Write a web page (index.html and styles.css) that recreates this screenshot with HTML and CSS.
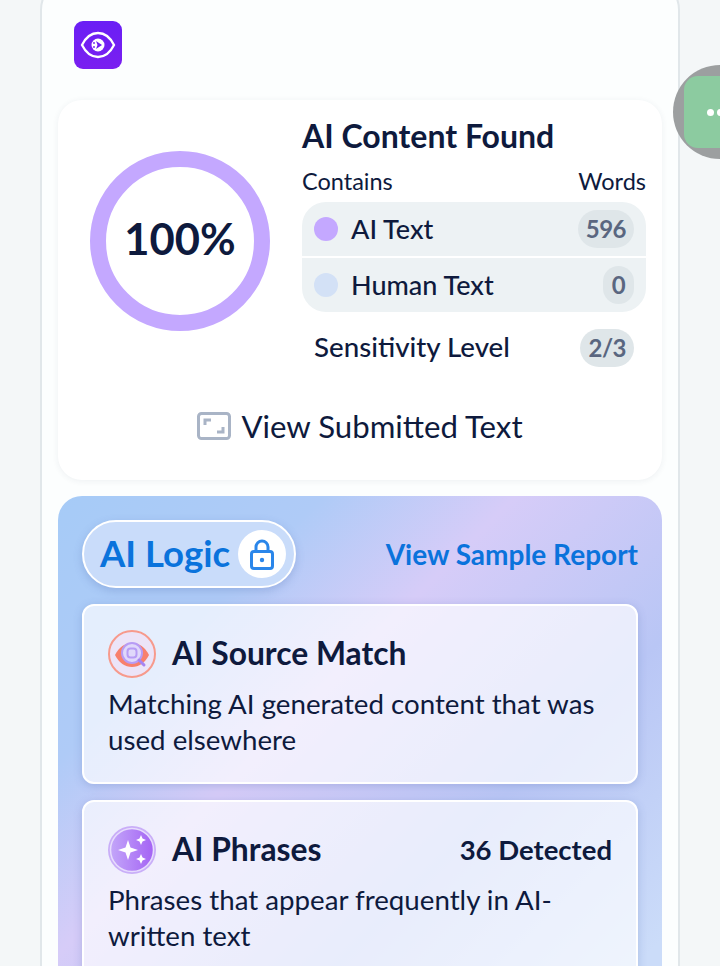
FILE: index.html
```html
<!DOCTYPE html>
<html lang="en">
<head>
    <meta charset="UTF-8">
    <meta name="viewport" content="width=device-width, initial-scale=1.0">
    <title>AI Content Found</title>
    <link rel="stylesheet" href="styles.css">
</head>
<body>
    <div class="card">

        <div class="brand">
            <svg viewBox="0 0 48 48" width="48" height="48" fill="none">
                <path d="M8 24c4-8 10-12 16-12s12 4 16 12c-4 8-10 12-16 12S12 32 8 24z" stroke="#fff" stroke-width="2.300"/>
                <circle cx="24" cy="24" r="6.500" fill="#fff"/>
                <path d="M22 20l6 4-6 4 1.500-4z" fill="#6d1ff2"/>
                <circle cx="20" cy="22" r="0.900" fill="#6d1ff2"/>
                <circle cx="20" cy="26" r="0.900" fill="#6d1ff2"/>
            </svg>
        </div>

        <div class="summary">
            <div class="summary-top">
                <div class="ring"><span class="ring-value">100%</span></div>
                <div class="stats">
                    <div class="stats-title">AI Content Found</div>
                    <div class="stats-head">
                        <span>Contains</span>
                        <span>Words</span>
                    </div>
                    <div class="stats-table">
                        <div class="stats-row">
                            <span class="dot dot-ai"></span>
                            <span class="stats-label">AI Text</span>
                            <span class="count">596</span>
                        </div>
                        <div class="stats-row">
                            <span class="dot dot-human"></span>
                            <span class="stats-label">Human Text</span>
                            <span class="count">0</span>
                        </div>
                    </div>
                    <div class="sensitivity">
                        <span class="stats-label sensitivity-label">Sensitivity Level</span>
                        <span class="count">2/3</span>
                    </div>
                </div>
            </div>
            <div class="view-text">
                <svg viewBox="0 0 34 28" width="34" height="28" fill="none" stroke="#a9b4c6" stroke-width="3">
                    <rect x="1.500" y="1.500" width="31" height="25" rx="3"/>
                    <path d="M8 13V8h6M26 15v5h-6"/>
                </svg>
                <span>View Submitted Text</span>
            </div>
        </div>

        <div class="logic">
            <div class="logic-head">
                <div class="logic-pill">
                    <span class="logic-pill-text">AI Logic</span>
                    <span class="lock">
                        <svg viewBox="0 0 24 31" width="24" height="31" fill="none" stroke="#2a86ea" stroke-width="3">
                            <rect x="1.500" y="12.500" width="21" height="17" rx="2.500"/>
                            <path d="M6 12V8a6 6 0 0 1 12 0v4"/>
                            <circle cx="12" cy="21" r="2.200" fill="#2a86ea" stroke="none"/>
                        </svg>
                    </span>
                </div>
                <span class="sample-link">View Sample Report</span>
            </div>

            <div class="logic-card">
                <div class="logic-card-head">
                    <svg class="logic-icon" viewBox="0 0 48 48" width="48" height="48" fill="none">
                        <circle cx="24" cy="24" r="23" fill="#ece4f8" stroke="#f79a8c" stroke-width="2"/>
                        <path d="M7 25c4-8 10-12 17-12s13 4 17 12c-4 8-10 12-17 12S11 33 7 25z" fill="#f8806c"/>
                        <circle cx="24" cy="23" r="10" fill="#e0d8fb" stroke="#b79cf5" stroke-width="2"/>
                        <rect x="19.500" y="18.500" width="9" height="9" rx="3" stroke="#b79cf5" stroke-width="2"/>
                        <path d="M31 30l5 5" stroke="#a583f2" stroke-width="3" stroke-linecap="round"/>
                    </svg>
                    <span class="logic-title">AI Source Match</span>
                </div>
                <p class="logic-desc">Matching AI generated content that was used elsewhere</p>
            </div>

            <div class="logic-card">
                <div class="logic-card-head">
                    <svg class="logic-icon" viewBox="0 0 48 48" width="48" height="48" fill="none">
                        <defs>
                            <linearGradient id="sparkle-bg" x1="0" y1="0" x2="1" y2="0">
                                <stop offset="0" stop-color="#c3a6f9"/>
                                <stop offset="1" stop-color="#a463f4"/>
                            </linearGradient>
                        </defs>
                        <circle cx="24" cy="24" r="24" fill="#c9aef8"/>
                        <circle cx="24" cy="24" r="21.500" fill="url(#sparkle-bg)" stroke="#e7dcfd" stroke-width="1.500"/>
                        <path d="M20 14l2.500 7.500L30 24l-7.500 2.500L20 34l-2.500-7.500L10 24l7.500-2.500z" fill="#fff"/>
                        <path d="M33 9l1.500 3.500L38 14l-3.500 1.500L33 19l-1.500-3.500L28 14l3.500-1.500z" fill="#fff"/>
                        <path d="M33 28l1.500 3.500L38 33l-3.500 1.500L33 38l-1.500-3.500L28 33l3.500-1.500z" fill="#fff"/>
                    </svg>
                    <span class="logic-title">AI Phrases</span>
                    <span class="detected">36 Detected</span>
                </div>
                <p class="logic-desc">Phrases that appear frequently in AI-written text</p>
            </div>
        </div>
    </div>

    <div class="chat-bubble">
        <div class="chat-inner"><span></span><span></span><span></span></div>
    </div>
</body>
</html>
```

FILE: styles.css
```css
html, body {
    height: 966px;
    overflow: hidden;
}
body {
    margin: 0;
    padding: 0 40px;
    background-color: #f4f7f8;
    font-family: "Lato", "Open Sans", sans-serif;
    color: #0e1a3d;
    position: relative;
}
.card {
    margin-top: -22px;
    box-sizing: border-box;
    width: 640px;
    padding: 41px 16px 0;
    background-color: #fcfefe;
    border: 2px solid #e1e7ea;
    border-radius: 32px;
}
.brand {
    width: 48px;
    height: 48px;
    margin-left: 16px;
    border-radius: 9px;
    background: linear-gradient(180deg, #6a1ff5, #7a1ff0);
}
.brand svg {
    display: block;
}

/* panel de arriba */
.summary {
    margin-top: 31px;
    height: 380px;
    box-sizing: border-box;
    padding: 19px 16px 0 32px;
    background-color: #fff;
    border-radius: 24px;
    box-shadow: 0 1px 6px rgba(40, 60, 90, 0.07);
}
.summary-top {
    display: flex;
    align-items: flex-start;
    gap: 32px;
}
.ring {
    flex: none;
    display: flex;
    align-items: center;
    justify-content: center;
    box-sizing: border-box;
    width: 180px;
    height: 180px;
    margin-top: 32px;
    border: 16px solid #c4a8ff;
    border-radius: 50%;
}
.ring-value {
    padding-bottom: 6px;
    font-size: 43.500px;
    font-weight: 700;
}
.stats {
    flex: 1;
}
.stats-title {
    font-size: 32px;
    font-weight: 700;
    line-height: 34px;
}
.stats-head {
    display: flex;
    justify-content: space-between;
    margin-top: 14px;
    font-size: 23.500px;
    line-height: 28px;
}
.stats-table {
    margin-top: 7px;
    border-radius: 24px;
    overflow: hidden;
}
.stats-row {
    display: flex;
    align-items: center;
    height: 54px;
    padding: 0 12px;
    background-color: #edf2f4;
}
.stats-row + .stats-row {
    margin-top: 2px;
}
.dot {
    width: 24px;
    height: 24px;
    margin-right: 13px;
    border-radius: 50%;
}
.dot-ai {
    background-color: #c4a8ff;
}
.dot-human {
    background-color: #d3e1f6;
}
.stats-label {
    padding-bottom: 2px;
    font-size: 27px;
    font-weight: 500;
}
.sensitivity-label {
    padding-bottom: 3px;
    font-size: 27.700px;
}
.count {
    margin-left: auto;
    min-width: 15px;
    padding: 0 8px;
    height: 38px;
    line-height: 38px;
    border-radius: 19px;
    background-color: #dfe6e9;
    color: #5a6680;
    font-size: 24px;
    font-weight: 700;
    letter-spacing: -0.5px;
    text-align: center;
}
.sensitivity {
    display: flex;
    align-items: center;
    margin-top: 17px;
    padding: 0 12px;
}
.view-text {
    display: flex;
    align-items: center;
    justify-content: center;
    gap: 10px;
    margin: 39px 0 0 -16px;
    font-size: 31.200px;
    line-height: 40px;
}

/* panel AI Logic */
.logic {
    margin-top: 16px;
    height: 600px;
    padding: 24px;
    box-sizing: border-box;
    border-radius: 24px;
    background: linear-gradient(135deg, #a6cbf7 0%, #afcbf7 22%, #d6ccf8 38%, #b9c6f5 62%, #cbdcf9 87%);
}
.logic-head {
    display: flex;
    align-items: center;
    justify-content: space-between;
}
.logic-pill {
    display: flex;
    align-items: center;
    gap: 8px;
    box-sizing: border-box;
    height: 68px;
    padding: 0 8px 0 16px;
    border: 2px solid #fff;
    border-radius: 34px;
    background-color: #c9dcfa;
    box-shadow: 0 3px 8px rgba(70, 100, 170, 0.25);
    color: #0a73dc;
}
.logic-pill-text {
    padding-bottom: 3px;
    font-size: 36.500px;
    font-weight: 700;
}
.lock {
    display: flex;
    align-items: center;
    justify-content: center;
    width: 48px;
    height: 48px;
    border-radius: 50%;
    background-color: #fff;
}
.sample-link {
    color: #0a73dc;
    font-size: 28px;
    font-weight: 700;
}
.logic-card {
    box-sizing: border-box;
    height: 180px;
    margin-top: 16px;
    padding: 24px 24px 0;
    border: 2px solid #fff;
    border-radius: 12px;
    background-color: rgba(255, 255, 255, 0.68);
    box-shadow: 0 2px 8px rgba(70, 100, 170, 0.25);
}
.logic-card-head {
    display: flex;
    align-items: center;
    gap: 16px;
}
.logic-icon {
    flex: none;
}
.logic-title {
    padding-bottom: 3px;
    font-size: 31.800px;
    font-weight: 700;
}
.detected {
    margin-left: auto;
    padding-bottom: 2px;
    font-size: 27.500px;
    font-weight: 700;
}
.logic-desc {
    margin: 8px 0 0;
    font-size: 27.700px;
    line-height: 36px;
}

/* burbuja de chat, cortada por la derecha */
.chat-bubble {
    position: absolute;
    left: 673px;
    top: 65px;
    display: flex;
    align-items: center;
    justify-content: center;
    width: 94px;
    height: 94px;
    border-radius: 50%;
    background-color: #9c9fa0;
}
.chat-inner {
    display: flex;
    align-items: center;
    justify-content: center;
    gap: 3px;
    width: 72px;
    height: 72px;
    border-radius: 14px;
    background-color: #8ccba0;
}
.chat-inner span {
    width: 7px;
    height: 7px;
    border-radius: 50%;
    background-color: #fff;
}
```
